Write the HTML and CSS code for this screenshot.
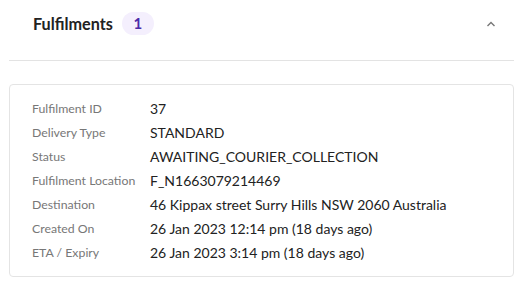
FILE: index.html
```html
<!DOCTYPE html>
<html lang="en">
<head>
    <meta charset="UTF-8">
    <title>Fulfilments</title>
    <link rel="stylesheet" href="styles.css">
</head>
<body>
    <div class="panel">
        <div class="panel-header">
            <div class="title">
                <h2>Fulfilments</h2>
                <span class="count">1</span>
            </div>
            <svg class="chevron" width="10" height="6" viewBox="0 0 10 6">
                <path d="M1.5 5 L5 1.5 L8.5 5" fill="none" stroke="#777" stroke-width="1.4"/>
            </svg>
        </div>

        <div class="card">
            <div class="row"><span class="label">Fulfilment ID</span><span class="value">37</span></div>
            <div class="row"><span class="label">Delivery Type</span><span class="value">STANDARD</span></div>
            <div class="row"><span class="label">Status</span><span class="value">AWAITING_COURIER_COLLECTION</span></div>
            <div class="row"><span class="label">Fulfilment Location</span><span class="value">F_N1663079214469</span></div>
            <div class="row"><span class="label">Destination</span><span class="value">46 Kippax street Surry Hills NSW 2060 Australia</span></div>
            <div class="row"><span class="label">Created On</span><span class="value">26 Jan 2023 12:14 pm (18 days ago)</span></div>
            <div class="row"><span class="label">ETA / Expiry</span><span class="value">26 Jan 2023 3:14 pm (18 days ago)</span></div>
        </div>
    </div>
</body>
</html>
```

FILE: styles.css
```css
body {
    margin: 0;
    font-family: Lato, "Open Sans", sans-serif;
    background: #fff;
    color: #222;
}

.panel {
    padding: 0 15px 0 9px;
}

.panel-header {
    display: flex;
    align-items: flex-start;
    justify-content: space-between;
    height: 48px;
    margin-top: 12px;
    padding: 0 18px 0 24px;
    border-bottom: 1px solid #e3e3e3;
}

.title {
    display: flex;
    align-items: center;
    gap: 9px;
}

.title h2 {
    margin: 0;
    font-size: 16.2px;
    font-weight: 700;
    color: #222;
    line-height: 23px;
}

.count {
    display: inline-block;
    min-width: 32px;
    height: 23px;
    line-height: 23px;
    text-align: center;
    border-radius: 12px;
    background: #f4effd;
    color: #4b2aa8;
    font-size: 15px;
    font-weight: 700;
}

.chevron {
    margin-top: 9px;
}

.card {
    margin-top: 23px;
    border: 1px solid #e4e4e4;
    border-radius: 4px;
    padding: 11px 22px 12px;
}

.row {
    display: flex;
    align-items: center;
    height: 24px;
}

.label {
    width: 118px;
    flex-shrink: 0;
    font-size: 12.3px;
    color: #777;
}

.value {
    font-size: 14px;
    color: #222;
}
```
